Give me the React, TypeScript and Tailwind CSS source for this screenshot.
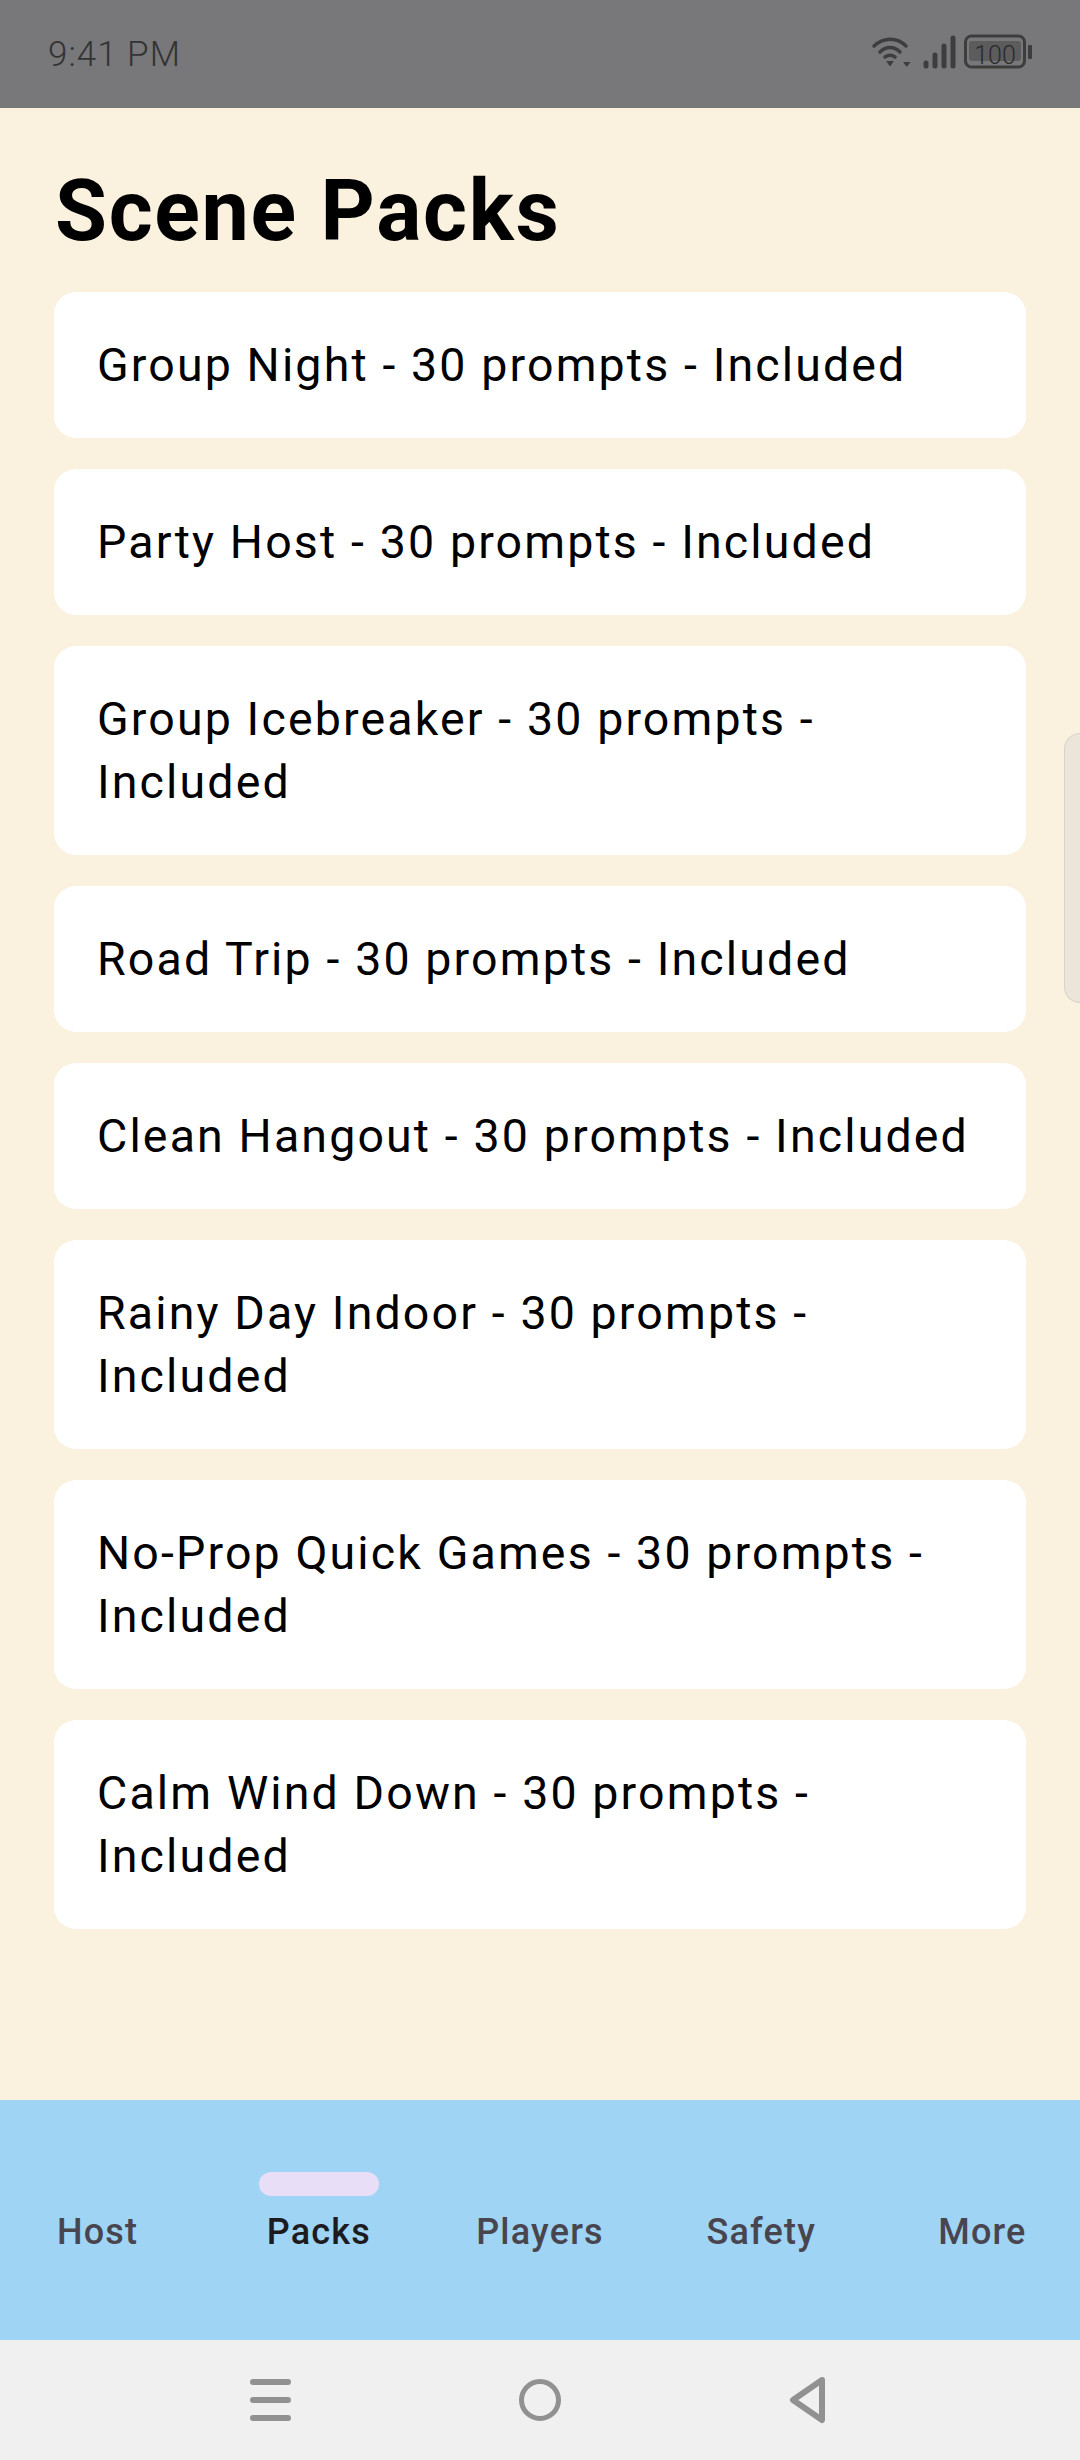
const packs = [
  "Group Night - 30 prompts - Included",
  "Party Host - 30 prompts - Included",
  "Group Icebreaker - 30 prompts - Included",
  "Road Trip - 30 prompts - Included",
  "Clean Hangout - 30 prompts - Included",
  "Rainy Day Indoor - 30 prompts - Included",
  "No-Prop Quick Games - 30 prompts - Included",
  "Calm Wind Down - 30 prompts - Included",
];

const tabs = ["Host", "Packs", "Players", "Safety", "More"];

function StatusIcons() {
  return (
    <svg width="168" height="48" viewBox="868 30 168 48" fill="none">
      <g stroke="#3d3d3d" strokeWidth="3.5" strokeLinecap="round">
        <path d="M874 48 C884 39 897 39 906 48" />
        <path d="M880 54 C886 48 894 48 900 54" />
        <path d="M885 59 C888 57 892 57 895 59" />
      </g>
      <path d="M886 63 H894 L890 68.5 Z M903 64 H910.5 L906.8 69 Z" fill="#3d3d3d" />
      <g stroke="#3d3d3d" strokeWidth="5" strokeLinecap="round">
        <path d="M926 65 V68" />
        <path d="M935 57 V68" />
        <path d="M944 48 V68" />
        <path d="M953 40 V68" />
      </g>
      <rect x="965.5" y="38" width="59" height="31" rx="6" stroke="#3d3d3d" strokeWidth="3" />
      <rect x="969" y="43" width="52" height="20" rx="3" fill="#5c5c5c" />
      <rect x="1028" y="47" width="4" height="14" rx="1" fill="#3d3d3d" />
    </svg>
  );
}

export default function App() {
  return (
    <div className="w-[1080px] h-[2460px] flex flex-col bg-[#faf1df] font-['Roboto',sans-serif] overflow-hidden relative">
      <div className="h-[108px] shrink-0 bg-[#78787a] flex items-center justify-between pl-[48px] pr-[44px]">
        <span className="text-[35px] tracking-[1px] mt-[2px] font-light text-[#333]">9:41 PM</span>
        <div className="relative h-[48px] mt-[-5px]">
          <StatusIcons />
          <span className="absolute left-[101px] top-[14px] w-[52px] text-center text-[25px] leading-[28px] font-light text-[#2b2b2b]">
            100
          </span>
        </div>
      </div>

      <div className="flex-1 px-[54px]">
        <h1 className="text-[84.4px] tracking-[1.7px] font-bold leading-[100px] mt-[54px] mb-[30px] text-black ml-[1px]">Scene Packs</h1>
        <div className="flex flex-col gap-[31px]">
          {packs.map((p) => (
            <div key={p} className="bg-white rounded-[22px] px-[43px] pt-[42px] pb-[41px] text-[46.5px] leading-[63px] tracking-[2.14px] text-black">
              {p}
            </div>
          ))}
        </div>
      </div>

      <div className="absolute right-0 top-[733px] w-[16px] h-[270px] bg-[#ece6da] border border-r-0 border-[#d8d3c7] rounded-l-[20px]" />

      <div className="h-[240px] shrink-0 bg-[#9fd4f4] flex mx-[-13px]">
        {tabs.map((t) => (
          <div key={t} className="flex-1 flex flex-col items-center pt-[72px]">
            <div className={t === "Packs" ? "w-[120px] h-[24px] rounded-full bg-[#e8def8]" : "h-[24px]"} />
            <span className={"mt-[12px] text-[36px] leading-[48px] font-medium tracking-[1.2px] " + (t === "Packs" ? "text-[#1d1b20]" : "text-[#49454f]")}>
              {t}
            </span>
          </div>
        ))}
      </div>

      <div className="h-[120px] shrink-0 bg-[#f0f0f0] flex items-center justify-center">
        <svg width="680" height="120" viewBox="200 2340 680 120" fill="none" stroke="#919191">
          <g strokeWidth="6" strokeLinecap="round">
            <path d="M253 2382 H288" />
            <path d="M253 2400 H288" />
            <path d="M253 2418 H288" />
          </g>
          <circle cx="540" cy="2400" r="18.5" strokeWidth="5" />
          <path d="M822 2380 L793 2400 L822 2420 Z" strokeWidth="6" strokeLinejoin="round" />
        </svg>
      </div>
    </div>
  );
}
